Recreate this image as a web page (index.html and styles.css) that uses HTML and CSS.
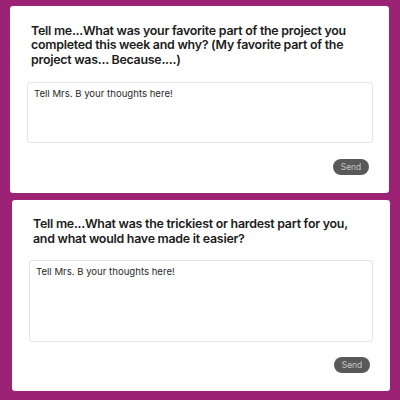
FILE: index.html
```html
<!DOCTYPE html>
<html>
<head>
<meta charset="utf-8">
<link rel="stylesheet" href="styles.css">
</head>
<body>
<main class="page">
  <section class="card card-one">
    <h2 class="question">Tell me...What was your favorite part of the project you completed this week and why? (My favorite part of the project was... Because....)</h2>
    <textarea class="answer answer-short" placeholder="Tell Mrs. B your thoughts here!"></textarea>
    <div class="actions"><button class="send">Send</button></div>
  </section>
  <section class="card card-two">
    <h2 class="question">Tell me...What was the trickiest or hardest part for you, and what would have made it easier?</h2>
    <textarea class="answer answer-tall" placeholder="Tell Mrs. B your thoughts here!"></textarea>
    <div class="actions"><button class="send">Send</button></div>
  </section>
</main>
</body>
</html>
```
FILE: styles.css
```css
html, body {
  margin: 0;
  padding: 0;
  background: #9b2275;
}
body {
  width: 400px;
  height: 400px;
  overflow: hidden;
  font-family: Inter, "Liberation Sans", sans-serif;
}
.page {
  display: flex;
  flex-direction: column;
  gap: 7px;
  padding-top: 6px;
}
.card {
  background: #ffffff;
  border-radius: 3px;
  display: flex;
  flex-direction: column;
  box-sizing: border-box;
}
.card-one {
  margin: 0 11px 0 10px;
  height: 187px;
  padding: 17.5px 16px 0 17px;
}
.card-two {
  margin: 0 10px 0 12px;
  height: 191px;
  padding: 17px 17px 0 17px;
}
.question {
  margin: 0 0 14px 0;
  padding: 0 20px 0 4px;
  font-size: 12.4px;
  line-height: 14.9px;
  letter-spacing: -0.25px;
  font-weight: 600;
  color: #1c1c1c;
}
.card-two .question {
  margin-bottom: 13px;
}
.answer {
  display: block;
  width: 100%;
  box-sizing: border-box;
  border: 1px solid #e4e4e4;
  border-radius: 3px;
  padding: 5px 6px;
  resize: none;
  font-family: Inter, "Liberation Sans", sans-serif;
  font-size: 9.6px;
  line-height: 11px;
  color: #222;
  background: #fff;
}
.answer::placeholder {
  color: #2a2a2a;
  opacity: 1;
}
.answer-short { height: 61px; }
.answer-tall { height: 82px; }
.actions {
  display: flex;
  justify-content: flex-end;
  margin-top: 16px;
  padding-right: 4px;
}
.card-two .actions {
  margin-top: 15px;
  padding-right: 3px;
}
.send {
  width: 36px;
  height: 16px;
  border: none;
  border-radius: 8px;
  background: #595959;
  color: #c4c4c4;
  font-family: Inter, "Liberation Sans", sans-serif;
  font-size: 8.5px;
  padding: 0;
}
```
